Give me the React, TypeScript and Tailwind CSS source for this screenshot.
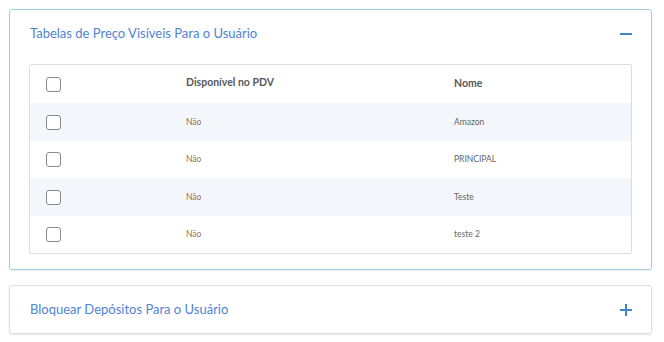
import React from 'react';

const rows = [
  { pdv: 'Não', nome: 'Amazon' },
  { pdv: 'Não', nome: 'PRINCIPAL' },
  { pdv: 'Não', nome: 'Teste' },
  { pdv: 'Não', nome: 'teste 2' },
];

const Box = () => (
  <span className="block w-[15px] h-[15px] rounded-[3px] border border-[#8a8a8a] bg-white" />
);

export default function App() {
  return (
    <div className="w-[664px] h-[342px] bg-white pt-[9px] pl-[9px] pr-[12px] font-['Lato',sans-serif]">
      <div className="border border-[#9fcfe3] rounded-[3px] shadow-[0_1px_2px_rgba(0,0,0,0.08)]">
        <div className="h-[46px] flex items-center justify-between pl-[20px] pr-[19px] pt-[2px]">
          <span className="text-[13px] text-[#4f83d6]">Tabelas de Preço Visíveis Para o Usuário</span>
          <span className="block w-[12px] h-[2px] bg-[#3f86cf]" />
        </div>
        <div className="mx-[19px] mt-[8px] mb-[15px] border border-[#dadde2] rounded-[2px] overflow-hidden">
          <table className="w-full text-left">
            <thead>
              <tr className="h-[38px]">
                <th className="w-[156px] pl-[16px] align-middle"><Box /></th>
                <th className="w-[268px] text-[10.5px] font-bold text-[#585858] pb-[3px]">Disponível no PDV</th>
                <th className="text-[10.5px] font-bold text-[#585858]">Nome</th>
              </tr>
            </thead>
            <tbody>
              {rows.map((r, i) => (
                <tr key={i} className={i % 2 === 0 ? 'h-[38px] bg-[#f3f6fa]' : 'h-[37px] bg-white'}>
                  <td className="pl-[16px]"><Box /></td>
                  <td className="text-[8.5px] text-[#94705c]">{r.pdv}</td>
                  <td className="text-[8.5px] text-[#666]">{r.nome}</td>
                </tr>
              ))}
            </tbody>
          </table>
        </div>
      </div>
      <div className="mt-[15px] h-[49px] border border-[#dcdde0] rounded-[3px] shadow-[0_1px_2px_rgba(0,0,0,0.1)] flex items-center justify-between pl-[20px] pr-[19px]">
        <span className="text-[13px] text-[#4f83d6]">Bloquear Depósitos Para o Usuário</span>
        <span className="relative block w-[12px] h-[12px]">
          <span className="absolute left-0 top-[5px] w-[12px] h-[2px] bg-[#3f86cf]" />
          <span className="absolute left-[5px] top-0 w-[2px] h-[12px] bg-[#3f86cf]" />
        </span>
      </div>
    </div>
  );
}
